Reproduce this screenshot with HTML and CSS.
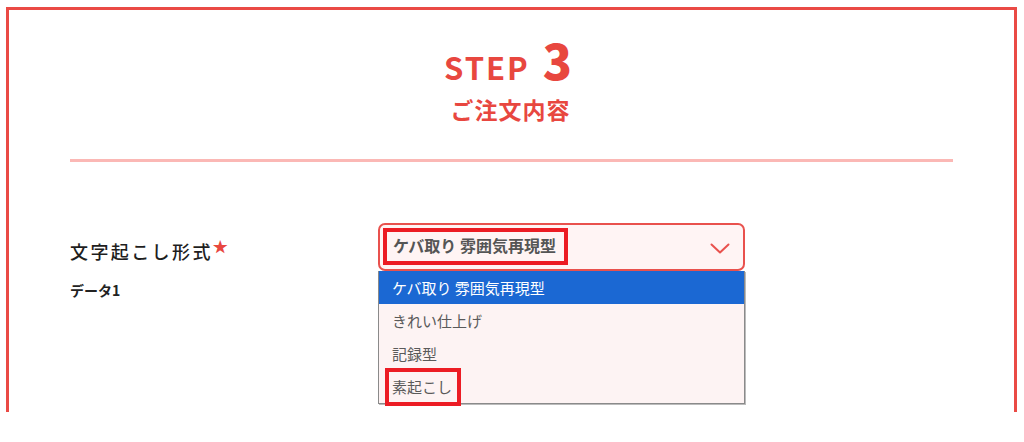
FILE: index.html
```html
<!DOCTYPE html>
<html lang="ja">
<head>
<meta charset="utf-8">
<title>STEP 3 ご注文内容</title>
<link rel="stylesheet" href="styles.css">
</head>
<body>
<div class="page">
  <section class="card">
    <header class="step">
      <h2 class="step-title"><span class="step-word">STEP</span><span class="step-num">3</span></h2>
      <p class="step-sub">ご注文内容</p>
    </header>
    <hr class="divider">
    <div class="field">
      <div class="field-label">
        <p class="label">文字起こし形式<span class="req">★</span></p>
        <p class="sublabel">データ1</p>
      </div>
      <div class="select-wrap">
        <div class="select">
          <span class="select-value">ケバ取り 雰囲気再現型</span>
          <svg class="chevron" width="20" height="11" viewBox="0 0 20 11" aria-hidden="true"><path d="M1.5 1.5 L10 9.5 L18.5 1.5" fill="none" stroke="#e9514d" stroke-width="2" stroke-linecap="round" stroke-linejoin="round"/></svg>
        </div>
        <ul class="options">
          <li class="option is-active">ケバ取り 雰囲気再現型</li>
          <li class="option">きれい仕上げ</li>
          <li class="option">記録型</li>
          <li class="option is-marked">素起こし</li>
        </ul>
      </div>
    </div>
  </section>
</div>
</body>
</html>
```
FILE: styles.css
```css
*, *::before, *::after { box-sizing: border-box; }
html, body { margin: 0; padding: 0; background: #fff; }
body {
  font-family: "Noto Sans CJK JP", "Noto Sans", sans-serif;
  color: #222;
  overflow: hidden;
}
.page {
  padding: 7px 7px 0 6px;
}
.card {
  border: 3px solid #ea4a45;
  border-bottom: 0;
  height: 405px;
  padding: 25px 61px 0;
}
.step {
  text-align: center;
  color: #e8473f;
}
.step-title {
  margin: 0;
  padding-right: 7px;
  font-weight: 900;
  line-height: 1;
  display: flex;
  justify-content: center;
  align-items: baseline;
  gap: 13px;
}
.step-word {
  font-size: 31px;
  font-weight: 700;
  letter-spacing: 2px;
}
.step-num {
  font-size: 48px;
}
.step-sub {
  margin: 13px 0 0;
  padding-right: 2px;
  font-size: 23px;
  font-weight: 700;
  line-height: 1.2;
  letter-spacing: 1px;
}
.divider {
  margin: 35px 0 0;
  border: 0;
  height: 3px;
  background: #fbb8b5;
}
.field {
  margin-top: 61px;
  display: grid;
  grid-template-columns: 308px 367px;
}
.label {
  margin: 12px 0 0;
  font-size: 18px;
  font-weight: 500;
  letter-spacing: 2.4px;
  color: #1e1e1e;
  line-height: 1.4;
}
.req {
  color: #e8473f;
  font-size: 15px;
  vertical-align: 7px;
  letter-spacing: 0;
}
.sublabel {
  margin: 17px 0 0;
  font-size: 14px;
  font-weight: 700;
  color: #222;
  line-height: 1.4;
}
.select {
  height: 48px;
  border: 2px solid #e9514d;
  border-radius: 7px;
  background: #fff4f4;
  display: flex;
  align-items: center;
  justify-content: space-between;
  padding: 0 13px 0 3px;
}
.select-value {
  border: 4px solid #ec1c24;
  padding: 3px 8px 5px 6px;
  font-size: 16px;
  font-weight: 700;
  color: #555;
  line-height: 1.3;
}
.chevron {
  margin-top: 3px;
}
.options {
  list-style: none;
  margin: 0;
  padding: 0;
  border: 1px solid #8a8a8a;
  border-top: 0;
  background: #fdf3f3;
  box-shadow: 1px 1px 0 #bbb;
}
.option {
  position: relative;
  height: 33px;
  display: flex;
  align-items: center;
  padding-left: 13px;
  font-size: 15px;
  color: #5a5a5a;
}
.option.is-active {
  background: #1b68d3;
  color: #fff;
}
.option.is-marked::after {
  content: "";
  position: absolute;
  left: 6px;
  top: -2px;
  width: 76px;
  height: 38px;
  border: 4px solid #ec1c24;
}
```
